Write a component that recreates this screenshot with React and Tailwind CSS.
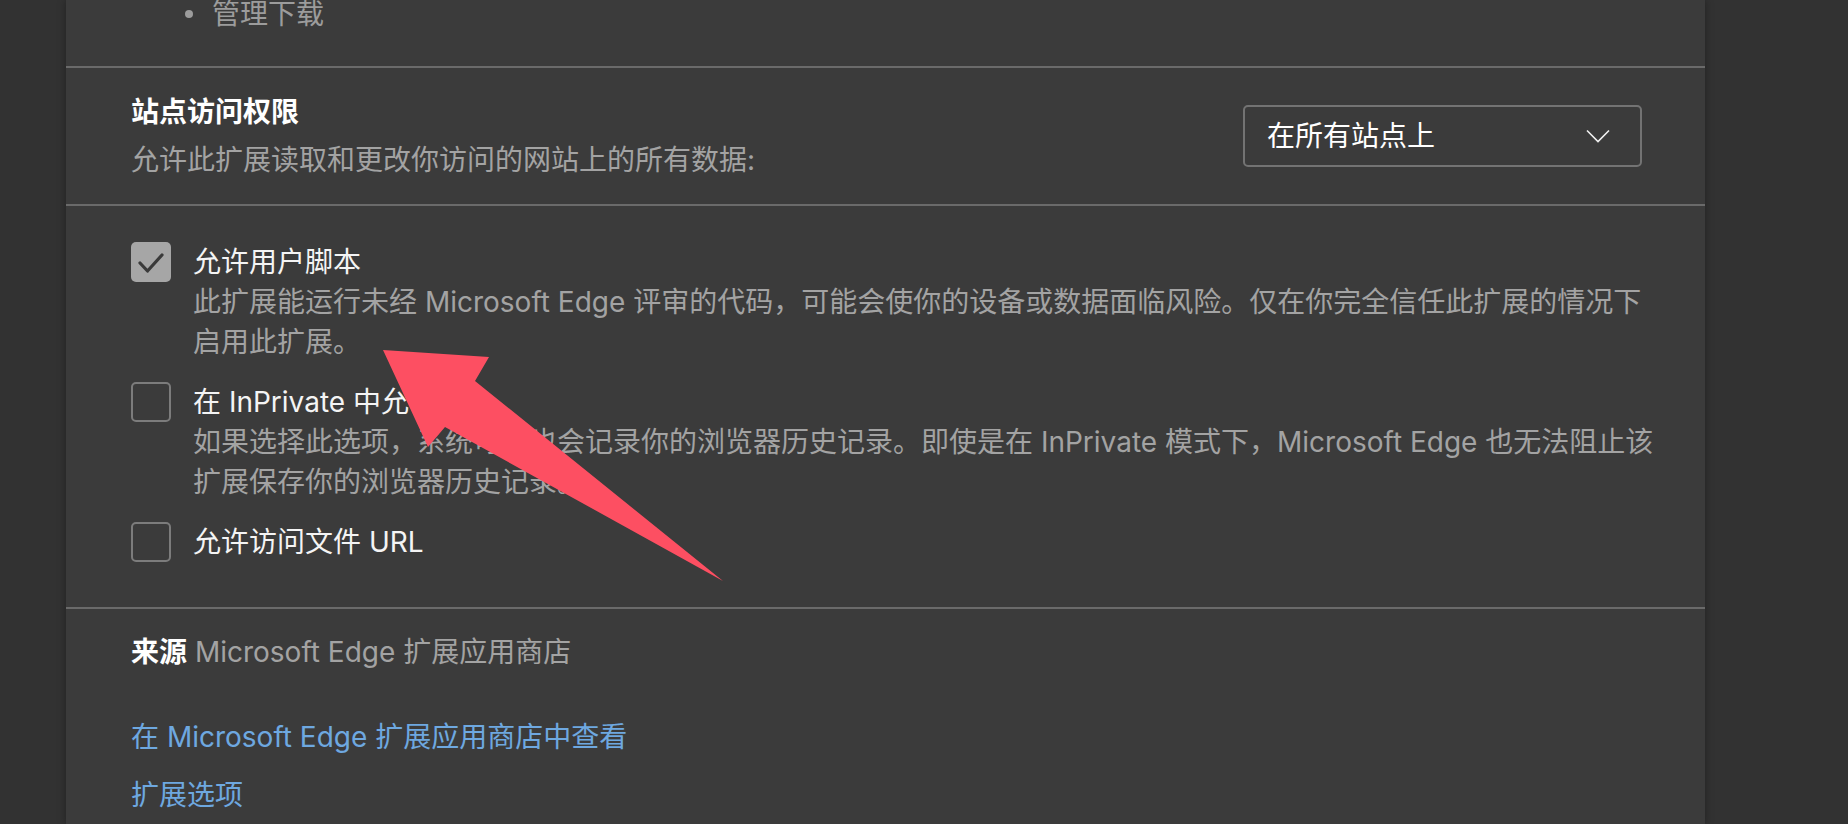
import React from "react";

// a single option row with its checkbox
const Option = ({ checked, title, lines }) => {
  return (
    <div className="flex gap-[22px]">
      <div
        className={
          checked
            ? "w-10 h-10 shrink-0 rounded-[5px] bg-[#a6a6a6] flex items-center justify-center"
            : "w-10 h-10 shrink-0 rounded-[5px] border-2 border-[#7c7c7c]"
        }
      >
        {checked && (
          <svg width="40" height="40" viewBox="0 0 40 40" fill="none">
            <path d="M9 21 L16.5 29 L31 13" stroke="#3a3a3a" strokeWidth="3.2" strokeLinecap="round" strokeLinejoin="round" />
          </svg>
        )}
      </div>
      <div className="flex flex-col">
        <div className="text-[28px] leading-[40px] text-[#f4f4f4] whitespace-nowrap">{title}</div>
        {lines &&
          lines.map((line) => (
            <div key={line} className="text-[28px] leading-[40px] text-[#a3a3a3] whitespace-nowrap">
              {line}
            </div>
          ))}
      </div>
    </div>
  );
};

const App = () => {
  return (
    <div className="relative h-[824px] w-full overflow-hidden bg-[#323232] font-['Inter','Noto_Sans_CJK_SC',sans-serif]">
      <div className="ml-[66px] w-[1639px] h-full bg-[#3b3b3b] shadow-[0_0_8px_rgba(0,0,0,0.35)]">
        {/* tail of the permissions list */}
        <div className="pl-[119px] pb-[38px] flex items-center gap-[19px]">
          <div className="w-2 h-2 rounded-full bg-[#9c9c9c]" />
          <span className="text-[28px] leading-[28px] text-[#9c9c9c]">管理下载</span>
        </div>

        {/* site access */}
        <div className="border-t-2 border-[#6a6a6a] h-[138px] px-[65px] flex items-center justify-between">
          <div>
            <div className="text-[28px] leading-[48px] font-bold text-white">站点访问权限</div>
            <div className="text-[28px] leading-[48px] text-[#a3a3a3]">允许此扩展读取和更改你访问的网站上的所有数据:</div>
          </div>
          <div className="w-[399px] h-[62px] mr-[-2px] rounded-[5px] border-2 border-[#737373] flex items-center justify-between pl-[22px] pr-[30px]">
            <span className="text-[28px] text-white">在所有站点上</span>
            <svg width="24" height="14" viewBox="0 0 24 14" fill="none">
              <path d="M1 1.5 L12 12.5 L23 1.5" stroke="#f0f0f0" strokeWidth="1.6" />
            </svg>
          </div>
        </div>

        {/* options */}
        <div className="border-t-2 border-[#6a6a6a] pt-[36px] pb-[45px] px-[65px] flex flex-col gap-5">
          <Option
            checked
            title="允许用户脚本"
            lines={[
              "此扩展能运行未经 Microsoft Edge 评审的代码，可能会使你的设备或数据面临风险。仅在你完全信任此扩展的情况下",
              "启用此扩展。",
            ]}
          />
          <Option
            title="在 InPrivate 中允许"
            lines={[
              "如果选择此选项，系统可能也会记录你的浏览器历史记录。即使是在 InPrivate 模式下，Microsoft Edge 也无法阻止该",
              "扩展保存你的浏览器历史记录。",
            ]}
          />
          <Option title="允许访问文件 URL" />
        </div>

        {/* source and links */}
        <div className="border-t-2 border-[#6a6a6a] pt-[23px] px-[65px] flex flex-col items-start">
          <div className="text-[28px] leading-[40px]">
            <span className="font-bold text-white">来源</span>
            <span className="text-[#a3a3a3]"> Microsoft Edge 扩展应用商店</span>
          </div>
          <a className="mt-[45px] text-[28px] leading-[40px] text-[#6ea8e0]">在 Microsoft Edge 扩展应用商店中查看</a>
          <a className="mt-[18px] text-[28px] leading-[40px] text-[#6ea8e0]">扩展选项</a>
        </div>
      </div>

      {/* annotation arrow drawn over the page */}
      <svg className="absolute inset-0 pointer-events-none" width="1848" height="824" viewBox="0 0 1848 824">
        <polygon points="383,350 489,357 475,381 723,581 445,427 428,447" fill="#fd4f62" />
      </svg>
    </div>
  );
};

export default App;
